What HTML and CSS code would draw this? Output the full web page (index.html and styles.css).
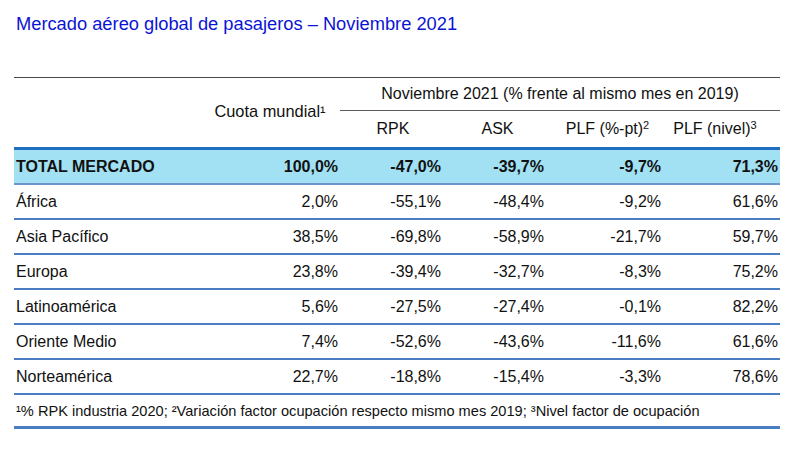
FILE: index.html
```html
<!DOCTYPE html>
<html lang="es">
<head>
<meta charset="utf-8">
<title>Mercado aéreo global de pasajeros</title>
<link rel="stylesheet" href="styles.css">
</head>
<body>
<h1 class="title">Mercado aéreo global de pasajeros – Noviembre 2021</h1>
<table class="data">
  <colgroup>
    <col class="c-label">
    <col class="c-share">
    <col class="c-rpk">
    <col class="c-ask">
    <col class="c-plfpt">
    <col class="c-plf">
  </colgroup>
  <thead>
    <tr class="h1">
      <th class="blank" rowspan="2"></th>
      <th class="share-h" rowspan="2">Cuota mundial¹</th>
      <th class="group" colspan="4">Noviembre 2021 (% frente al mismo mes en 2019)</th>
    </tr>
    <tr class="h2">
      <th>RPK</th>
      <th>ASK</th>
      <th>PLF (%-pt)<sup>2</sup></th>
      <th class="last-h">PLF (nivel)<sup>3</sup></th>
    </tr>
  </thead>
  <tbody>
    <tr class="total">
      <td class="label">TOTAL MERCADO</td><td class="share">100,0%</td><td>-47,0%</td><td>-39,7%</td><td>-9,7%</td><td class="last">71,3%</td>
    </tr>
    <tr>
      <td class="label">África</td><td class="share">2,0%</td><td>-55,1%</td><td>-48,4%</td><td>-9,2%</td><td class="last">61,6%</td>
    </tr>
    <tr>
      <td class="label">Asia Pacífico</td><td class="share">38,5%</td><td>-69,8%</td><td>-58,9%</td><td>-21,7%</td><td class="last">59,7%</td>
    </tr>
    <tr>
      <td class="label">Europa</td><td class="share">23,8%</td><td>-39,4%</td><td>-32,7%</td><td>-8,3%</td><td class="last">75,2%</td>
    </tr>
    <tr>
      <td class="label">Latinoamérica</td><td class="share">5,6%</td><td>-27,5%</td><td>-27,4%</td><td>-0,1%</td><td class="last">82,2%</td>
    </tr>
    <tr>
      <td class="label">Oriente Medio</td><td class="share">7,4%</td><td>-52,6%</td><td>-43,6%</td><td>-11,6%</td><td class="last">61,6%</td>
    </tr>
    <tr>
      <td class="label">Norteamérica</td><td class="share">22,7%</td><td>-18,8%</td><td>-15,4%</td><td>-3,3%</td><td class="last">78,6%</td>
    </tr>
    <tr class="foot">
      <td colspan="6">¹% RPK industria 2020; ²Variación factor ocupación respecto mismo mes 2019; ³Nivel factor de ocupación</td>
    </tr>
  </tbody>
</table>
</body>
</html>
```

FILE: styles.css
```css
html, body {
  margin: 0;
  padding: 0;
  background: #ffffff;
}

body {
  font-family: "Liberation Sans", Arial, sans-serif;
  color: #111111;
}

.title {
  margin: 13px 0 0 16px;
  font-size: 18.3px;
  line-height: 21px;
  font-weight: normal;
  color: #0c14d4;
}

.data {
  margin: 43px 0 0 14px;
  width: 766px;
  table-layout: fixed;
  border-collapse: separate;
  border-spacing: 0;
  font-size: 16px;
}

.c-label { width: 186px; }
.c-share { width: 140px; }
.c-rpk { width: 106px; }
.c-ask { width: 103px; }
.c-plfpt { width: 117px; }
.c-plf { width: 114px; }

th {
  font-weight: normal;
  padding: 0;
  text-align: center;
}

.h1 th {
  border-top: 1px solid #4a4a4a;
}

.h1 .group {
  height: 32px;
  border-bottom: 1px solid #5a5a5a;
}

.h2 th {
  height: 36px;
}

.blank,
.share-h,
.h2 th {
  border-bottom: 3px solid #1f6ebf;
}

.share-h {
  padding-bottom: 3px;
  font-size: 16.4px;
}

.last-h {
  padding-right: 16px;
}

sup {
  font-size: 11px;
  line-height: 0;
  vertical-align: 5px;
}

td {
  height: 33px;
  padding: 0 5px 0 0;
  text-align: right;
  border-bottom: 2px solid #4b7dc3;
  white-space: nowrap;
}

td.label {
  text-align: left;
  padding-left: 2px;
}

td.share {
  padding-right: 2px;
}

td.last {
  padding-right: 2px;
}

.total td {
  background: #a2e1f4;
  font-weight: bold;
  height: 33px;
  border-bottom: 2px solid #6f96c8;
}

.foot td {
  text-align: left;
  padding-left: 2px;
  font-size: 14.6px;
  height: 31px;
  border-bottom: 3px solid #4b7dc3;
}
```
